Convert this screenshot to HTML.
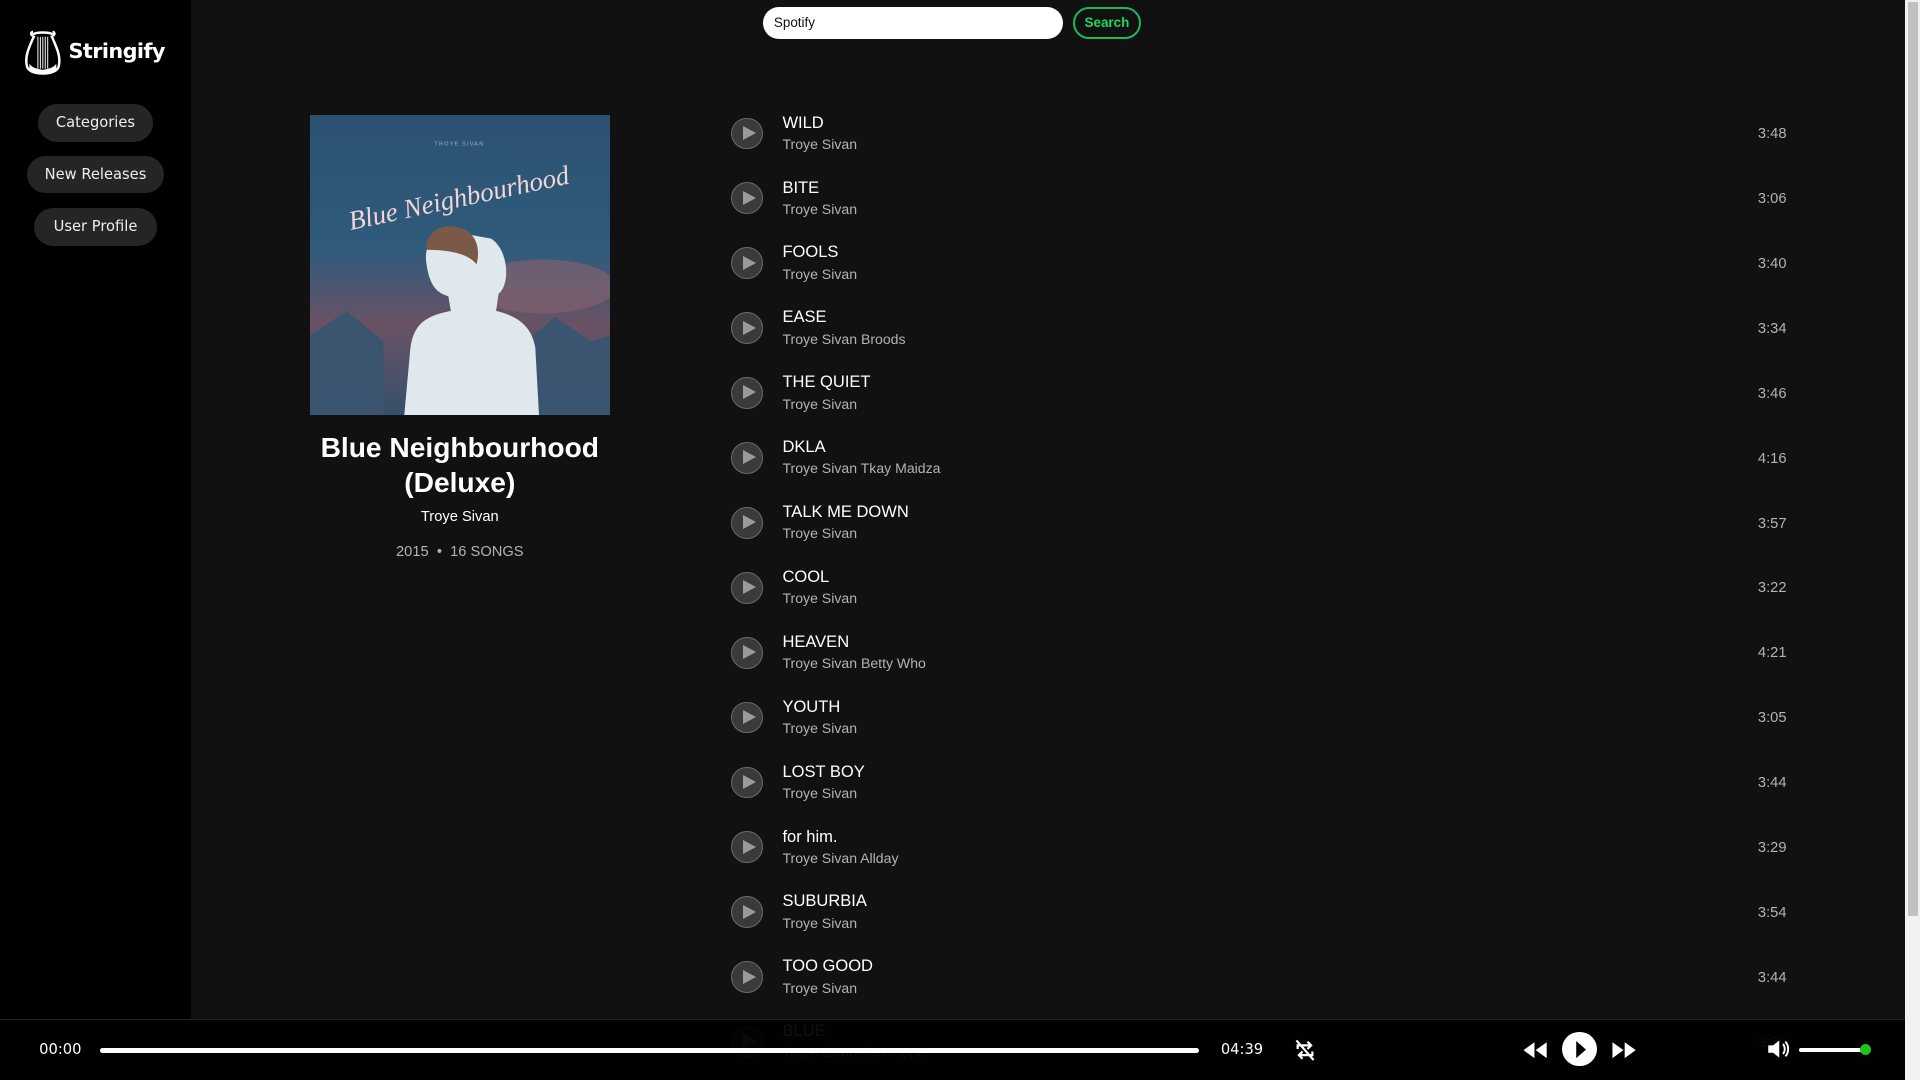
<!DOCTYPE html>
<html><head><meta charset="utf-8"><style>
html,body{margin:0;padding:0;background:#111;overflow:hidden}
#root{zoom:1.22449;width:1568px;height:882px;position:relative;background:#111;font-family:"Liberation Sans",Arial,sans-serif;overflow:hidden}
.side{position:absolute;left:0;top:0;width:156px;height:882px;background:#000}
.logo{position:absolute;left:18px;top:22px;display:flex;align-items:center;color:#fff;font-family:"DejaVu Sans",sans-serif;font-weight:bold;font-size:17px;letter-spacing:-0.5px}
.pill{position:absolute;background:#252525;color:#eee;font-family:"DejaVu Sans",sans-serif;font-size:12px;height:31px;line-height:31px;border-radius:16px;text-align:center}
.search{position:absolute;left:623px;top:6px;width:245px;height:26px;background:#fff;border-radius:13px;font-size:11px;line-height:26px;padding-left:9px;box-sizing:border-box;color:#111}
.sbtn{position:absolute;left:876px;top:6px;width:56px;height:26px;border:2px solid #1db954;box-sizing:border-box;border-radius:13px;color:#1ed760;font-weight:bold;font-size:11px;line-height:23px;text-align:center}
.cover{position:absolute;left:253px;top:94px;width:245px;height:245px}
.title{position:absolute;left:240px;width:271px;top:351px;text-align:center;color:#fff;font-weight:bold;font-size:23px;line-height:29px}
.artist{position:absolute;left:240px;width:271px;top:416px;text-align:center;color:#fff;font-size:12px}
.meta{position:absolute;left:240px;width:271px;top:444px;text-align:center;color:#b3b3b3;font-size:12px}
.row{position:absolute;left:597px;width:862px;height:53px}
.pb{position:absolute;left:0;top:0;width:26px;height:26px;border-radius:50%;background:#3a3a3a;border:1.5px solid #6a6a6a;box-sizing:border-box}
.pb:after{content:"";position:absolute;left:9px;top:6px;border-left:11px solid #9a9a9a;border-top:6.5px solid transparent;border-bottom:6.5px solid transparent}
.tn{position:absolute;left:42px;top:-4px;color:#fff;font-size:13.5px}
.ta{position:absolute;left:42px;top:15px;color:#b3b3b3;font-size:11.5px}
.td{position:absolute;right:0;top:7px;color:#b3b3b3;font-size:12px}
.player{position:absolute;left:0;top:832px;width:1556px;height:50px;background:rgba(0,0,0,0.94);border-top:1px solid #222;box-sizing:border-box}
.scroll{position:absolute;left:1556px;top:0;width:12px;height:882px;background:#f1f1f1}
.thumb{position:absolute;left:2px;top:2px;width:8px;height:746px;background:#c1c1c1}
</style></head><body><div id="root">
<div class="side">
 <div class="logo"><svg width="34" height="40" viewBox="0 0 34 40"><g fill="none" stroke="#fff" stroke-width="2"><path d="M9 4c-2 0-2 3 0 3M25 4c2 0 2 3 0 3M9 6c3-2 13-2 16 0M10 7C6 16 2 24 4 32c1 4 6 6 13 6s12-2 13-6c2-8-2-16-6-25"/></g><g stroke="#fff" stroke-width="0.8"><path d="M13 8v26M15 8v26M17 8v26M19 8v26M21 8v26"/></g><path d="M6 30c3 4 7 4 11 5 4-1 8-1 11-5v4c-3 3-7 4-11 4s-8-1-11-4z" fill="#fff"/></svg><span style="margin-left:4px">Stringify</span></div>
 <div class="pill" style="left:31px;top:85px;width:94px">Categories</div>
 <div class="pill" style="left:22px;top:127px;width:112px">New Releases</div>
 <div class="pill" style="left:28px;top:170px;width:100px">User Profile</div>
</div>
<div class="search">Spotify</div><div class="sbtn">Search</div>
<svg class="cover" viewBox="0 0 245 245"><defs><linearGradient id="sky" x1="0" y1="0" x2="0" y2="1"><stop offset="0" stop-color="#2c5272"/><stop offset="0.45" stop-color="#2f5b7c"/><stop offset="0.7" stop-color="#6a5264"/><stop offset="1" stop-color="#35506a"/></linearGradient></defs><rect width="245" height="245" fill="url(#sky)"/><ellipse cx="190" cy="140" rx="60" ry="22" fill="#8a6270" opacity=".6"/><path d="M0 180l30-20 30 25 0 60H0zM170 190l30-25 30 20 15-5v65h-75z" fill="#3b5470"/><path d="M115 95c-15 0-22 12-20 26 2 14 6 24 18 27l2 12c-20 4-30 10-33 30l-5 55h110l-3-55c-3-18-15-26-32-30l2-14c10-8 8-36-6-45z" fill="#dfe8ec"/><path d="M95 110c0-15 12-22 27-18 12 3 18 15 14 30-6-8-20-12-41-12z" fill="#7a5a46"/><text x="122" y="25" font-size="4.5" fill="#8fb8d0" text-anchor="middle" font-family="Liberation Sans" letter-spacing="1">TROYE SIVAN</text><text x="122" y="75" font-size="22" fill="#f0d6d6" text-anchor="middle" font-family="Liberation Serif" font-style="italic" transform="rotate(-12 122 70)">Blue Neighbourhood</text></svg>
<div class="title">Blue Neighbourhood<br>(Deluxe)</div>
<div class="artist">Troye Sivan</div>
<div class="meta">2015 &nbsp;•&nbsp; 16 SONGS</div>

<div class="row" style="top:96px"><div class="pb"></div><div class="tn">WILD</div><div class="ta">Troye Sivan</div><div class="td">3:48</div></div>
<div class="row" style="top:149px"><div class="pb"></div><div class="tn">BITE</div><div class="ta">Troye Sivan</div><div class="td">3:06</div></div>
<div class="row" style="top:202px"><div class="pb"></div><div class="tn">FOOLS</div><div class="ta">Troye Sivan</div><div class="td">3:40</div></div>
<div class="row" style="top:255px"><div class="pb"></div><div class="tn">EASE</div><div class="ta">Troye Sivan Broods</div><div class="td">3:34</div></div>
<div class="row" style="top:308px"><div class="pb"></div><div class="tn">THE QUIET</div><div class="ta">Troye Sivan</div><div class="td">3:46</div></div>
<div class="row" style="top:361px"><div class="pb"></div><div class="tn">DKLA</div><div class="ta">Troye Sivan Tkay Maidza</div><div class="td">4:16</div></div>
<div class="row" style="top:414px"><div class="pb"></div><div class="tn">TALK ME DOWN</div><div class="ta">Troye Sivan</div><div class="td">3:57</div></div>
<div class="row" style="top:467px"><div class="pb"></div><div class="tn">COOL</div><div class="ta">Troye Sivan</div><div class="td">3:22</div></div>
<div class="row" style="top:520px"><div class="pb"></div><div class="tn">HEAVEN</div><div class="ta">Troye Sivan Betty Who</div><div class="td">4:21</div></div>
<div class="row" style="top:573px"><div class="pb"></div><div class="tn">YOUTH</div><div class="ta">Troye Sivan</div><div class="td">3:05</div></div>
<div class="row" style="top:626px"><div class="pb"></div><div class="tn">LOST BOY</div><div class="ta">Troye Sivan</div><div class="td">3:44</div></div>
<div class="row" style="top:679px"><div class="pb"></div><div class="tn">for him.</div><div class="ta">Troye Sivan Allday</div><div class="td">3:29</div></div>
<div class="row" style="top:732px"><div class="pb"></div><div class="tn">SUBURBIA</div><div class="ta">Troye Sivan</div><div class="td">3:54</div></div>
<div class="row" style="top:785px"><div class="pb"></div><div class="tn">TOO GOOD</div><div class="ta">Troye Sivan</div><div class="td">3:44</div></div>
<div class="row" style="top:838px"><div class="pb"></div><div class="tn">BLUE</div><div class="ta">Troye Sivan Alex Hope</div><div class="td">3:29</div></div>

<div class="player">
 <div style="position:absolute;left:32px;top:17px;color:#fff;font-family:'DejaVu Sans',sans-serif;font-size:12px">00:00</div>
 <div style="position:absolute;left:82px;top:23px;width:897px;height:4px;background:#fff;border-radius:2px"></div>
 <div style="position:absolute;left:997px;top:17px;color:#fff;font-family:'DejaVu Sans',sans-serif;font-size:12px">04:39</div>
 <svg style="position:absolute;left:1057px;top:15px" width="18" height="20" viewBox="0 0 18 20" fill="none" stroke="#fff" stroke-width="1.8"><path d="M3 9V6h11M11 3l3 3-3 3M15 11v3H4M7 17l-3-3 3-3M2 2l14 16"/></svg>
 <svg style="position:absolute;left:1242px;top:17px" width="24" height="15" viewBox="0 0 24 15" fill="#fff"><path d="M11 1L2 7.5 11 14zM21 1l-9 6.5 9 6.5z"/></svg>
 <div style="position:absolute;left:1276px;top:10px;width:28px;height:28px;border-radius:50%;background:#fff"></div>
 <svg style="position:absolute;left:1286px;top:17px" width="10" height="14" viewBox="0 0 10 14" fill="#000"><path d="M1 0l8 7-8 7z"/></svg>
 <svg style="position:absolute;left:1315px;top:17px" width="24" height="15" viewBox="0 0 24 15" fill="#fff"><path d="M2 1l9 6.5L2 14zM12 1l9 6.5-9 6.5z"/></svg>
 <svg style="position:absolute;left:1443px;top:15px" width="20" height="18" viewBox="0 0 20 18"><path d="M1 6h4l5-4v14l-5-4H1z" fill="#fff"/><path d="M13 5c2 2 2 6 0 8M15 3c3 3 3 9 0 12" stroke="#fff" stroke-width="1.6" fill="none"/></svg>
 <div style="position:absolute;left:1469px;top:23px;width:55px;height:3px;background:#fff;border-radius:2px"></div>
 <div style="position:absolute;left:1519px;top:20px;width:9px;height:9px;border-radius:50%;background:#1ec41e"></div>
</div>
<div class="scroll"><div class="thumb"></div></div>
</div></body></html>
